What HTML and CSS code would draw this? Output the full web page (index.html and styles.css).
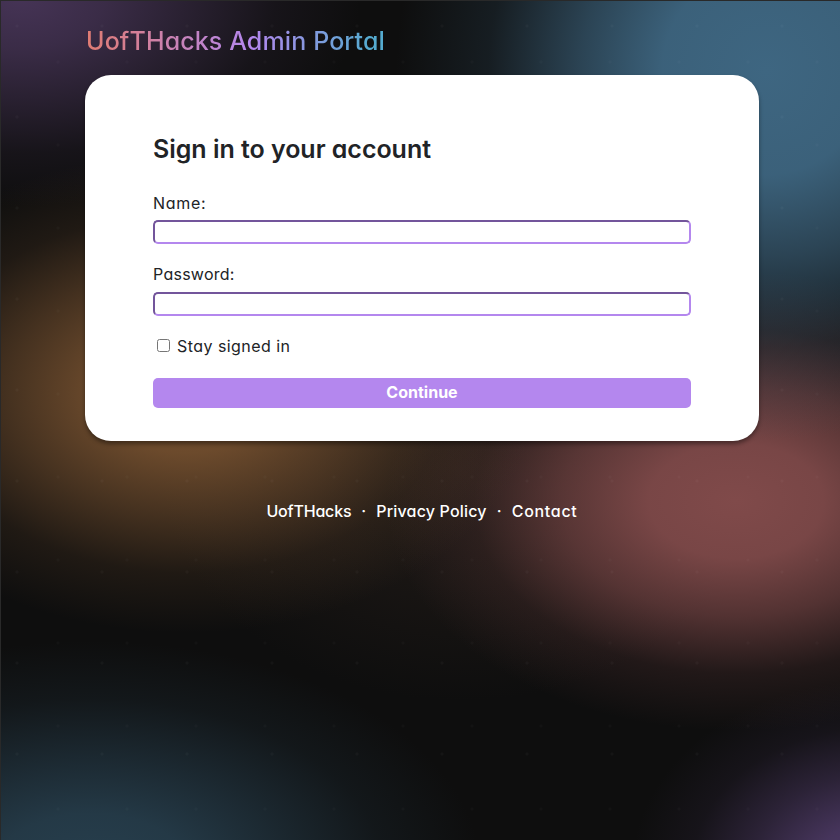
FILE: index.html
```html
<!DOCTYPE html>
<html lang="en">
<head>
<meta charset="utf-8">
<title>UofTHacks Admin Portal</title>
<link rel="stylesheet" href="styles.css">
</head>
<body>
<main class="page">
  <h1 class="brand"><span class="brand-text">UofTHacks Admin Portal</span></h1>
  <form class="card">
    <h2 class="title"><span>Sign in to your account</span></h2>
    <label class="label name" for="name"><span>Name:</span></label>
    <input class="field field-name" id="name" type="text">
    <label class="label password" for="password"><span>Password:</span></label>
    <input class="field" id="password" type="password">
    <label class="stay"><input class="check" type="checkbox"><span>Stay signed in</span></label>
    <button class="submit" type="button"><span>Continue</span></button>
  </form>
  <footer class="links">
    <a class="link-home">UofTHacks</a><span class="dot">·</span><a class="link-privacy">Privacy Policy</a><span class="dot">·</span><a class="link-contact">Contact</a>
  </footer>
</main>
</body>
</html>
```
FILE: styles.css
```css
* { box-sizing: border-box; }
html { height: 100%; background: #0e0e0e; }
body {
  margin: 0;
  height: 840px;
  overflow: hidden;
  color: #212326;
  font-family: Inter, sans-serif;
  font-feature-settings: "cv11";
  border-top: 1px solid #292929;
  border-left: 1px solid #292929;
  background:
    radial-gradient(circle at 16px 25px, #ffffff07 0 1px, transparent 2px) 0 0 / 85px 91px,
    radial-gradient(circle at 57px 61px, #ffffff05 0 1px, transparent 2px) 0 0 / 69px 83px,
    radial-gradient(ellipse 340px 210px at 20px -5px, #49365af2, #49365abf 25%, #49365a73 50%, #49365a26 75%, transparent),
    radial-gradient(ellipse 370px 370px at 765px 70px, #3e6681, #3e6681f0 28%, #3e66819c 50%, #3e66812c 75%, transparent),
    radial-gradient(ellipse 350px 240px at 185px 392px, #75502f, #75502fe8 25%, #75502f8c 50%, #75502f2c 75%, transparent),
    radial-gradient(ellipse 350px 230px at 735px 500px, #804a4a, #804a4aee 25%, #804a4a9a 50%, #804a4a2c 75%, transparent),
    radial-gradient(ellipse 390px 230px at 90px 870px, #273f4e, #273f4ee0 25%, #273f4e88 50%, #273f4e30 75%, transparent),
    radial-gradient(ellipse 240px 190px at 870px 870px, #523d6c, #523d6cd0 25%, #523d6c70 50%, #523d6c20 75%, transparent),
    radial-gradient(ellipse 300px 230px at 460px 470px, #2f241e80, #2f241e50 50%, transparent),
    #0e0e0e;
}
.page { width: 674px; margin: 0 0 0 84px; }
.brand { height: 74px; margin: 0; padding: 24px 0 0 1px; font: 500 25px/32px Inter, sans-serif; font-feature-settings: "cv11"; }
.brand-text {
  display: inline-block;
  white-space: nowrap;
  color: transparent;
  letter-spacing: 0.12px;
  background: linear-gradient(90deg, #e17c72, #b487ee 55%, #55abd0 95%);
  background-clip: text;
  -webkit-background-clip: text;
}
.card {
  display: flex;
  flex-direction: column;
  height: 366px;
  padding: 56px 68px 33px;
  border-radius: 26px;
  background: #fff;
  box-shadow: 0 3px 4px #0006;
}
.title { height: 60px; margin: 0; font: 600 25px/36px Inter, sans-serif; font-feature-settings: "cv11"; letter-spacing: -0.03px; }
.label { height: 29px; font-size: 16px; line-height: 24px; }
.name { letter-spacing: 0.7px; }
.password { height: 30px; letter-spacing: 0.25px; }
.field {
  width: 100%;
  height: 24px;
  margin: 0 0 18px;
  border: 2px solid;
  border-color: #73559b #b487ee #b487ee #73559b;
  border-radius: 5px;
  background: #fff;
  outline: none;
}
.stay { display: flex; align-items: center; height: 24px; margin-bottom: 20px; font-size: 16px; letter-spacing: 0.45px; }
.check { width: 13px; height: 13px; margin: -2px 7px 0 4px; }
.submit {
  height: 30px;
  border: 0;
  border-radius: 5px;
  background: #b487ee;
  color: #fff;
  font: 700 16px/28px Inter, sans-serif;
  padding: 0 0 2px;
}
.links { display: flex; justify-content: center; margin-top: 58px; color: #fff; font-size: 16px; line-height: 24px; font-weight: 500; }
.link-home { letter-spacing: -0.2px; }
.link-privacy { letter-spacing: 0.18px; }
.link-contact { letter-spacing: 0.7px; }
.dot { width: 25px; text-align: center; }
```
